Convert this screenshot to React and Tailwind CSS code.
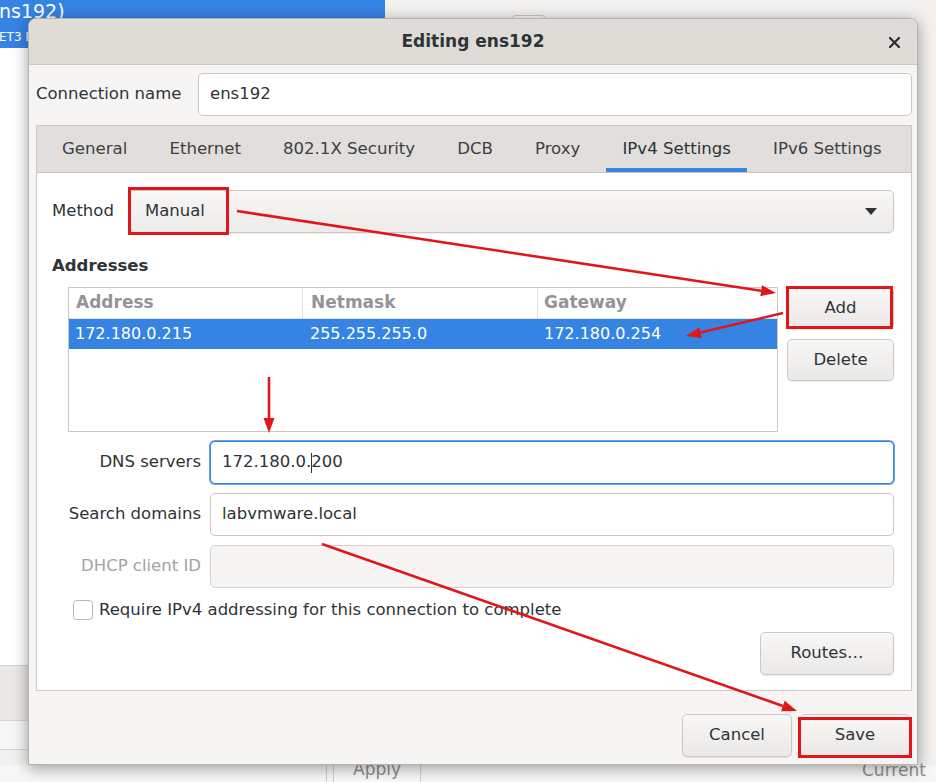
import React from "react";

const RED = "#e0161b";

// red annotation arrow: line + filled head
function Arrow({ x1, y1, x2, y2, len = 15, half = 5.5 }) {
  const dx = x2 - x1;
  const dy = y2 - y1;
  const d = Math.hypot(dx, dy);
  const ux = dx / d;
  const uy = dy / d;
  const bx = x2 - ux * len;
  const by = y2 - uy * len;
  const pts = `${x2},${y2} ${bx - uy * half},${by + ux * half} ${bx + uy * half},${by - ux * half}`;
  return (
    <g>
      <line x1={x1} y1={y1} x2={bx} y2={by} stroke={RED} strokeWidth="2.6" />
      <polygon points={pts} fill={RED} />
    </g>
  );
}

function Btn({ children, className = "" }) {
  return (
    <button
      className={`flex items-center justify-center rounded-[5px] border border-[#cdc7c2] bg-linear-to-b from-[#f8f7f6] to-[#ebe9e7] text-[16.5px] text-[#2e3436] shadow-[0_1px_1px_rgba(0,0,0,0.08)] ${className}`}
    >
      {children}
    </button>
  );
}

function Field({ children, focused, disabled }) {
  let cls = "border-[#cdc7c2] bg-white";
  if (focused) cls = "border-[#3584e4] bg-white shadow-[0_0_0_1px_#62a0ea]";
  if (disabled) cls = "border-[#d6d1cd] bg-[#f6f5f4]";
  return (
    <div className={`flex h-[43px] flex-1 items-center rounded-[5px] border pl-[11px] text-[16.5px] ${cls}`}>
      {children}
    </div>
  );
}

const tabs = ["General", "Ethernet", "802.1X Security", "DCB", "Proxy", "IPv4 Settings", "IPv6 Settings"];

export default function App() {
  return (
    <div className="relative h-[782px] w-[936px] overflow-hidden bg-[#f2f1f0] font-['DejaVu_Sans',sans-serif] text-[#2e3436]">
      {/* backdrop: window behind the dialog */}
      <div className="absolute left-0 top-0 h-[48px] w-[385px] overflow-hidden bg-[#3584e4] text-white">
        <div className="absolute left-[-1px] top-[0px] text-[19px] leading-[22px]">ns192)</div>
        <div className="absolute left-[-1px] top-[30px] text-[12px] leading-[14px]">ET3 E</div>
      </div>
      <div className="absolute left-0 top-[48px] flex w-[28px] flex-col">
        <div className="h-[617px] bg-white" />
        <div className="h-[56px] border-y border-[#d6d4d2] bg-[#e9e8e7]" />
        <div className="h-[29px] border-b border-[#d6d4d2] bg-[#f6f6f6]" />
      </div>
      <div className="absolute left-[512px] top-[15px] h-[30px] w-[34px] rounded-[4px] border border-[#c9c5c0] bg-[#f7f7f7]" />
      <div className="absolute left-0 top-[765px] h-[17px] w-[936px] bg-[#f7f7f7]" />
      <div className="absolute left-[326px] top-[740px] h-[42px] w-px bg-[#cfcfcf]" />
      <div className="absolute left-[333px] top-[740px] flex h-[50px] w-[88px] items-end justify-center rounded-[4px] border border-[#d3d0cd] bg-[#f9f9f9] pb-[10px] text-[17px] leading-[20px] text-[#8e8e8e]">
        Apply
      </div>
      <div className="absolute left-[862px] top-[760px] text-[17px] leading-[20px] text-[#8e8e8e]">Current h</div>

      {/* dialog */}
      <div className="absolute left-[28px] top-[18px] flex h-[747px] w-[890px] flex-col overflow-hidden rounded-t-[8px] border border-[#b8b2ac] bg-[#f6f5f4] shadow-[0_3px_16px_rgba(0,0,0,0.38)]">
        <div className="relative flex h-[46px] shrink-0 items-center justify-center border-b border-[#cdc8c3] bg-[#dfdcd8]">
          <span className="text-[17px] font-bold">Editing ens192</span>
          <svg className="absolute right-[17px] top-[18px]" width="11" height="11" viewBox="0 0 11 11">
            <path d="M1 1 L10 10 M10 1 L1 10" stroke="#2e3436" strokeWidth="2.4" strokeLinecap="round" />
          </svg>
        </div>

        <div className="flex flex-1 flex-col pl-[7px] pr-[5px]">
          <div className="mt-[8px] flex h-[43px] items-center">
            <span className="w-[162px] shrink-0 text-[16.5px]">Connection name</span>
            <Field>ens192</Field>
          </div>

          <div className="mt-[9px] flex h-[566px] flex-col border border-[#cdc7c2]">
            <div className="flex h-[47px] shrink-0 gap-[10px] border-b border-[#cdc7c2] bg-[#e1dedb] pl-[9px]">
              {tabs.map((t) => (
                <div
                  key={t}
                  className={`relative flex items-center px-[16px] text-[16.6px] ${t === "IPv4 Settings" ? "text-[#2e3436]" : "text-[#3d4143]"}`}
                >
                  {t}
                  {t === "IPv4 Settings" && <div className="absolute bottom-0 left-0 right-0 h-[4px] bg-[#3584e4]" />}
                </div>
              ))}
            </div>

            <div className="flex flex-1 flex-col bg-white pl-[15px] pr-[17px] pt-[17px]">
              <div className="flex h-[43px] items-center gap-[15px]">
                <span className="text-[16.5px]">Method</span>
                <div className="flex h-full flex-1 items-center justify-between rounded-[5px] border border-[#cdc7c2] bg-linear-to-b from-[#f8f7f6] to-[#edebe9] pl-[15px] pr-[16px] text-[16.5px] shadow-[0_1px_1px_rgba(0,0,0,0.08)]">
                  Manual
                  <svg width="12" height="7" viewBox="0 0 12 7">
                    <polygon points="0,0 12,0 6,7" fill="#2e3436" />
                  </svg>
                </div>
              </div>

              <div className="mt-[23px] text-[16.5px] font-bold leading-[20px]">Addresses</div>

              <div className="mt-[11px] flex gap-[9px] pl-[16px]">
                <div className="h-[145px] flex-1 border border-[#cdc7c2] bg-white">
                  <div className="grid h-[31px] grid-cols-[234px_235px_1fr] border-b border-[#e2dfdc] text-[17px] font-bold text-[#929595]">
                    <div className="flex items-center border-r border-[#e2dfdc] pl-[7px]">Address</div>
                    <div className="flex items-center border-r border-[#e2dfdc] pl-[8px]">Netmask</div>
                    <div className="flex items-center pl-[6px]">Gateway</div>
                  </div>
                  <div className="grid h-[30px] grid-cols-[234px_235px_1fr] bg-[#3584e4] text-[16px] text-white">
                    <div className="flex items-center pl-[6px]">172.180.0.215</div>
                    <div className="flex items-center pl-[7px]">255.255.255.0</div>
                    <div className="flex items-center pl-[6px]">172.180.0.254</div>
                  </div>
                </div>
                <div className="flex w-[107px] flex-col gap-[10px]">
                  <Btn className="h-[42px]">Add</Btn>
                  <Btn className="h-[42px]">Delete</Btn>
                </div>
              </div>

              <div className="mt-[9px] flex flex-col gap-[9px] pl-[16px]">
                <div className="flex items-center gap-[9px]">
                  <span className="w-[133px] text-right text-[16.5px]">DNS servers</span>
                  <Field focused>
                    172.180.0.
                    <span className="mx-[-0.5px] inline-block h-[20px] w-px bg-[#2e3436]" />
                    200
                  </Field>
                </div>
                <div className="flex items-center gap-[9px]">
                  <span className="w-[133px] text-right text-[16.5px]">Search domains</span>
                  <Field>labvmware.local</Field>
                </div>
                <div className="flex items-center gap-[9px]">
                  <span className="w-[133px] text-right text-[16.5px] text-[#a2a4a4]">DHCP client ID</span>
                  <Field disabled />
                </div>
              </div>

              <div className="mt-[12px] flex h-[20px] items-center gap-[6px] pl-[21px]">
                <div className="h-[20px] w-[20px] rounded-[4px] border border-[#bdb6b0] bg-white" />
                <span className="text-[16.5px]">Require IPv4 addressing for this connection to complete</span>
              </div>

              <div className="mt-[12px] flex justify-end">
                <Btn className="h-[43px] w-[134px]">Routes…</Btn>
              </div>
            </div>
          </div>

          <div className="flex flex-1 items-end justify-end gap-[8px] pb-[7px] pr-[2px]">
            <Btn className="h-[43px] w-[110px]">Cancel</Btn>
            <Btn className="h-[43px] w-[110px]">Save</Btn>
          </div>
        </div>
      </div>

      {/* annotations */}
      <svg className="pointer-events-none absolute left-0 top-0" width="936" height="782" viewBox="0 0 936 782">
        <rect x="129.5" y="188.5" width="98" height="45" fill="none" stroke={RED} strokeWidth="3" />
        <rect x="787.5" y="287.5" width="104" height="40" fill="none" stroke={RED} strokeWidth="3" />
        <rect x="799.5" y="718.5" width="111" height="38" fill="none" stroke={RED} strokeWidth="3" />
        <Arrow x1={237} y1={211} x2={776} y2={293} />
        <Arrow x1={783} y1={313} x2={686} y2={336} />
        <Arrow x1={269} y1={377} x2={269} y2={433} />
        <Arrow x1={322} y1={544} x2={797} y2={711} />
      </svg>
    </div>
  );
}
